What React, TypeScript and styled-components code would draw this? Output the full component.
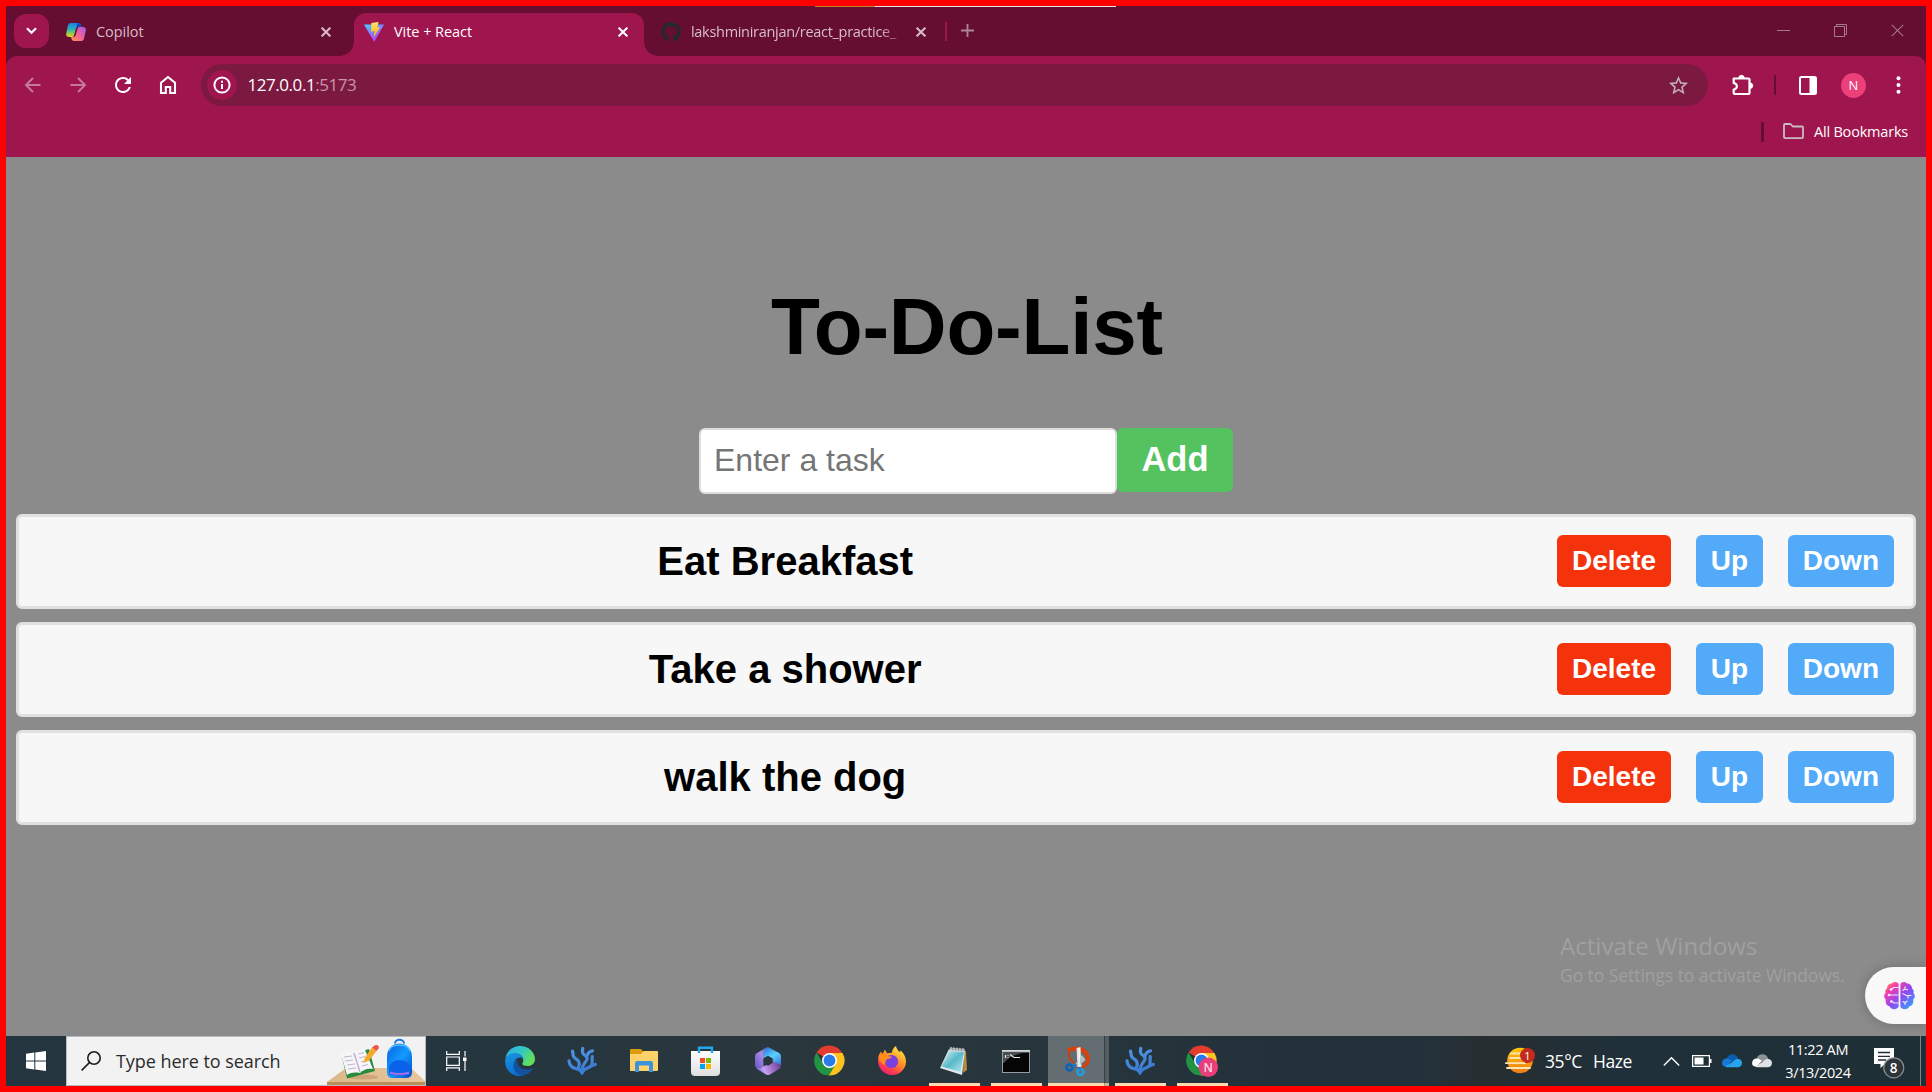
import React from "react";
import styled, { createGlobalStyle, css } from "styled-components";
import { FaGithub } from "react-icons/fa";
import { MdRefresh, MdStarBorder } from "react-icons/md";

const ui = `"Open Sans", "Noto Sans", sans-serif`;
const arial = `"Liberation Sans", Arial, sans-serif`;

const GlobalStyle = createGlobalStyle`
  *, *::before, *::after { box-sizing: border-box; }
  html, body { margin: 0; padding: 0; background: #ff0000; overflow: hidden; }
  svg { display: block; flex: none; }
`;

const Screen = styled.div`
  width: 1932px;
  height: 1092px;
  border: 6px solid #ff0000;
  display: flex;
  flex-direction: column;
  overflow: hidden;
  background: #8b8b8b;
`;

/* ---------- browser chrome ---------- */

const TabStrip = styled.header`
  position: relative;
  height: 50px;
  flex: none;
  display: flex;
  align-items: flex-start;
  background: #650e31;
`;

const EdgeSliver = styled.div`
  position: absolute;
  top: 0;
  left: 809px;
  width: 301px;
  height: 1px;
  background: linear-gradient(90deg, #c4822a 60px, #e8e4e6 60px);
`;

const TabSearch = styled.button`
  width: 35px;
  height: 34px;
  margin: 8px 0 0 8px;
  padding: 0;
  border: 0;
  border-radius: 12px;
  background: #9f154e;
  display: grid;
  place-items: center;
`;

const Tab = styled.div<{ $width: number; $active?: boolean; $left?: number; $end?: number }>`
  position: relative;
  width: ${(p) => p.$width}px;
  height: 43px;
  margin-top: 7px;
  margin-left: ${(p) => p.$left ?? 0}px;
  padding: 0 ${(p) => p.$end ?? 13}px 6px 10px;
  display: flex;
  align-items: center;
  gap: 10px;
  color: ${(p) => (p.$active ? "#ffffff" : "#d9bcc8")};
  ${(p) =>
    p.$active &&
    css`
      background: #9f154e;
      border-radius: 12px 12px 0 0;
      &::before,
      &::after {
        content: "";
        position: absolute;
        bottom: 0;
        width: 14px;
        height: 14px;
      }
      &::before {
        left: -14px;
        background: radial-gradient(circle at 0 0, transparent 13.5px, #9f154e 14px);
      }
      &::after {
        right: -14px;
        background: radial-gradient(circle at 100% 0, transparent 13.5px, #9f154e 14px);
      }
    `}
`;

const TabTitle = styled.span<{ $fade?: boolean; $spacing?: number }>`
  flex: 1;
  min-width: 0;
  overflow: hidden;
  white-space: nowrap;
  font: 400 14.5px/20px ${ui};
  letter-spacing: ${(p) => p.$spacing ?? -0.05}px;
  ${(p) => p.$fade && css`mask-image: linear-gradient(90deg, #000 88%, transparent 100%);`}
`;

const TabDivider = styled.i`
  width: 2px;
  height: 19px;
  margin: 16px 0 0 6px;
  background: #9f154e;
`;

const NewTab = styled.div`
  margin: 18px 0 0 14px;
`;

const WindowControls = styled.div`
  margin: 18px 22px 0 auto;
  display: flex;
  gap: 44px;
`;

const ToolbarBack = styled.div`
  flex: none;
  height: 101px;
  background: #650e31;
`;

const ToolbarArea = styled.div`
  height: 101px;
  border-radius: 11px 11px 0 0;
  background: #9f154e;
  display: flex;
  flex-direction: column;
`;

const Toolbar = styled.div`
  height: 58px;
  display: flex;
  align-items: center;
  padding-left: 15px;
`;

const NavButtons = styled.nav`
  width: 180px;
  display: flex;
  gap: 21px;
`;

const Omnibox = styled.div`
  width: 1507px;
  height: 42px;
  border-radius: 21px;
  background: #7c1940;
  display: flex;
  align-items: center;
  padding: 0 18px 0 6px;
`;

const SiteInfo = styled.span`
  width: 30px;
  height: 30px;
  border-radius: 50%;
  background: #9f154e;
  display: grid;
  place-items: center;
`;

const Url = styled.span`
  flex: 1;
  margin-left: 10.5px;
  font: 400 17px/24px ${ui};
  letter-spacing: -0.45px;
  color: #ffffff;
`;

const Port = styled.span`
  color: #c795aa;
`;

const VLine = styled.i<{ $w: number; $l: number; $r: number }>`
  flex: none;
  width: ${(p) => p.$w}px;
  height: 20px;
  margin-left: ${(p) => p.$l}px;
  margin-right: ${(p) => p.$r}px;
  background: #650e31;
  border-radius: 1px;
`;

const ToolbarActions = styled.div`
  display: flex;
  align-items: center;
  padding-left: 24px;
`;

const Avatar = styled.span`
  width: 25px;
  height: 25px;
  margin: 0 30px 0 24px;
  border-radius: 50%;
  background: #ec407a;
  color: #fff;
  font: 400 13px/25px ${ui};
  text-align: center;
`;

const BookmarkBar = styled.div`
  height: 34px;
  display: flex;
  align-items: center;
  justify-content: flex-end;
  padding: 0 18px 1px 0;
  margin-top: 1px;
  font: 400 14.5px/20px ${ui};
  letter-spacing: -0.2px;
  color: #ffffff;
`;

const BookmarkText = styled.span`
  width: 94px;
  margin-left: 10px;
  white-space: nowrap;
`;

/* ---------- page ---------- */

const Page = styled.main`
  position: relative;
  flex: 1;
  background: #8b8b8b;
  padding: 124px 10px 0;
  font-family: ${arial};
`;

const Heading = styled.h1`
  margin: 0 0 55px;
  padding-left: 2px;
  font: 700 80px/92px ${arial};
  letter-spacing: -0.2px;
  text-align: center;
  color: #000;
`;

const EntryRow = styled.form`
  display: flex;
  justify-content: center;
  align-items: flex-start;
  height: 66px;
  margin-bottom: 20px;
`;

const TaskInput = styled.input`
  width: 418px;
  height: 66px;
  padding: 0 12px 2px 13px;
  border: 2px solid #dddddd;
  border-radius: 6px;
  background: #fff;
  font: 400 32px/38px ${arial};
  outline: none;
  &::placeholder {
    color: #757575;
    opacity: 1;
  }
`;

const Button = styled.button<{ $color: string }>`
  height: 52px;
  padding: 0 15px 1px;
  border: 0;
  border-radius: 6px;
  background: ${(p) => p.$color};
  color: #fff;
  font: 700 28px/32px ${arial};
`;

const AddButton = styled(Button)`
  width: 116px;
  height: 64px;
  padding: 0 0 2px;
  font-size: 34.500px;
  line-height: 40px;
`;

const TaskList = styled.ol`
  list-style: none;
  margin: 0;
  padding: 0;
  display: flex;
  flex-direction: column;
  gap: 13px;
`;

const TaskItem = styled.li`
  height: 95px;
  padding: 0 19px 1px;
  border: 3px solid #e0e0e0;
  border-radius: 6px;
  background: #f7f7f7;
  display: flex;
  align-items: center;
  gap: 24.700px;
`;

const TaskText = styled.span`
  flex: 1;
  padding-bottom: 1px;
  font: 700 40px/46px ${arial};
  text-align: center;
  color: #000;
`;

const Watermark = styled.div`
  position: absolute;
  left: 1554px;
  top: 772px;
  color: #a0a0a0;
  font: 400 17.5px/24px ${ui};
  letter-spacing: -0.06px;
  white-space: nowrap;
`;

const WatermarkTitle = styled.div`
  font-size: 24px;
  line-height: 34px;
  letter-spacing: 0.03px;
`;

const BrainTab = styled.div`
  position: absolute;
  right: 0;
  top: 810px;
  width: 61px;
  height: 57px;
  padding-left: 19px;
  border-radius: 29px 0 0 29px;
  background: #f8f8f8;
  box-shadow: 0 0 12px rgba(0, 0, 0, 0.22);
  display: flex;
  align-items: center;
`;

/* ---------- taskbar ---------- */

const Taskbar = styled.footer`
  height: 50px;
  flex: none;
  display: flex;
  background: linear-gradient(90deg, #24353f 0%, #25363f 25%, #2a373d 40%, #26343c 58%, #22313a 66%, #23323a 74%, #272e31 77%, #20303a 84%, #1f2f36 100%);
  color: #fff;
`;

const StartButton = styled.div`
  width: 60px;
  display: grid;
  place-items: center;
`;

const SearchBox = styled.div`
  width: 360px;
  height: 50px;
  background: #f2f2f2;
  border: 1px solid #b9bcbe;
  display: flex;
  align-items: center;
  padding-left: 14px;
  overflow: hidden;
`;

const SearchText = styled.span`
  width: 213px;
  margin-left: 15px;
  font: 400 18px/26px ${ui};
  letter-spacing: -0.06px;
  color: #2b2b2b;
  white-space: nowrap;
`;

const AppSlot = styled.div<{ $state?: "open" | "focused" }>`
  width: 62px;
  height: 50px;
  display: grid;
  place-items: center;
  ${(p) =>
    p.$state === "open" &&
    css`background: linear-gradient(#fbdab0, #fbdab0) 6px 100% / 51px 3px no-repeat;`}
  ${(p) =>
    p.$state === "focused" &&
    css`
      background:
        linear-gradient(90deg, #fbdab0 56px, #a89a85 56px, #a89a85 57px, #d0b793 57px) 1px 100% / 61px 3px no-repeat,
        linear-gradient(90deg, transparent 1px, #646d71 1px, #646d71 57px, #363f43 57px, #363f43 58px, #545d61 58px);
    `}
`;

const TaskViewSlot = styled.div`
  width: 63px;
  padding: 15px 0 0 20px;
`;

const Tray = styled.div`
  margin-left: auto;
  width: 421px;
  display: flex;
  align-items: center;
`;

const Weather = styled.span`
  display: flex;
  gap: 11px;
  width: 122px;
  padding-left: 9px;
  font: 400 17.5px/24px ${ui};
  letter-spacing: -0.4px;
`;

const TrayIcons = styled.div`
  display: flex;
  align-items: center;
  gap: 10px;
  margin-left: 5px;
`;

const BatterySlot = styled.span`
  padding-left: 2px;
`;

const Clock = styled.div`
  width: 92px;
  font: 400 14.5px/23px ${ui};
  letter-spacing: -0.35px;
  text-align: center;
`;

const Notifications = styled.div`
  padding: 4px 0 0 10px;
`;

const ShowDesktop = styled.i`
  width: 6px;
  height: 50px;
  margin-left: auto;
  border-left: 1px solid #7b8488;
`;

/* ---------- icons ---------- */

const Cross = ({ size = 10, w = 2, color = "currentColor" }: { size?: number; w?: number; color?: string }) => (
  <svg width={size} height={size} viewBox="0 0 10 10" stroke={color} strokeWidth={w} fill="none">
    <path d="M.6.6 9.4 9.4M9.4.6.6 9.4" />
  </svg>
);

const CopilotIcon = () => (
  <svg width="20" height="20" viewBox="0 0 20 20">
    <defs>
      <linearGradient id="cpA" x1="0" y1="0" x2="0" y2="1">
        <stop offset="0" stopColor="#1f7fe8" />
        <stop offset=".45" stopColor="#27b5b8" />
        <stop offset=".75" stopColor="#8fce4b" />
        <stop offset="1" stopColor="#f3c91f" />
      </linearGradient>
      <linearGradient id="cpB" x1="1" y1="0" x2="0" y2="1">
        <stop offset="0" stopColor="#a45cf0" />
        <stop offset=".5" stopColor="#f0609a" />
        <stop offset="1" stopColor="#fb9a45" />
      </linearGradient>
    </defs>
    <path d="M5 1h7.5c1.4 0 2 .7 2.4 2l.6 2H12c-1.2 0-1.8.6-2.1 1.7L8 13.2C7.700 14.400 7 15 6 15H3c-2.400 0-3.300-1.600-2.700-4L2 3.600C2.500 1.800 3.400 1 5 1Z" fill="url(#cpA)" />
    <path d="M11.500 1h1c1.400 0 2 .7 2.400 2l.6 2H12c-1 0-1.700.5-2 1.500Z" fill="#1547c0" />
    <path d="M15 19H8c-1.400 0-2-.7-2.400-2L5 15h2.500c1.200 0 1.800-.6 2.100-1.700L11.500 6.800C11.800 5.600 12.500 5 13.500 5H17c2.400 0 3.300 1.600 2.700 4L18 16.400C17.500 18.200 16.600 19 15 19Z" fill="url(#cpB)" />
  </svg>
);

const ViteIcon = () => (
  <svg width="20" height="20" viewBox="0 0 20 20">
    <defs>
      <linearGradient id="vt" x1="0" y1="0" x2=".6" y2="1">
        <stop offset="0" stopColor="#41d1ff" />
        <stop offset="1" stopColor="#bd34fe" />
      </linearGradient>
      <linearGradient id="vb" x1="0" y1="0" x2="0" y2="1">
        <stop offset="0" stopColor="#ffea6a" />
        <stop offset="1" stopColor="#ffa800" />
      </linearGradient>
    </defs>
    <path d="M0 2.500 20 2.500 10.300 20Z" fill="url(#vt)" />
    <path d="M7.400.9 14.600 0 13.200 5.400l3-.5L9.600 15.400 10.400 9 7 9.800Z" fill="url(#vb)" />
  </svg>
);

const Arrow = ({ flip }: { flip?: boolean }) => (
  <svg width="24" height="24" viewBox="0 0 24 24" fill="none" stroke="#c8799b" strokeWidth="2" transform={flip ? "scale(-1 1)" : undefined}>
    <path d="M19.500 12H6M12 5l-7 7 7 7" />
  </svg>
);

const HomeIcon = () => (
  <svg width="24" height="24" viewBox="0 0 24 24" fill="none" stroke="#fff" strokeWidth="2.100">
    <path d="M5 9.700 12 4l7 5.700V20h-4.800v-6H9.800v6H5Z" />
  </svg>
);

const InfoIcon = () => (
  <svg width="18" height="18" viewBox="0 0 18 18" fill="none" stroke="#fff" strokeWidth="2">
    <circle cx="9" cy="9" r="7.600" />
    <path d="M9 8v5M9 4.700v2" />
  </svg>
);

const PuzzleIcon = () => (
  <svg width="22" height="22" viewBox="0 0 22 22">
    <path d="M1.700 4.500h5.500h9.300q1 0 1 1v4.500v9q0 1-1 1H2.700q-1 0-1-1v-3.500a2.900 2.900 0 0 0 0-6.300V4.500Z" fill="none" stroke="#fff" strokeWidth="2.200" strokeLinejoin="round" />
    <path d="M6.800 4a2.700 2.700 0 0 1 5.400 0ZM18 9a2.700 2.700 0 0 1 0 5.400Z" fill="#fff" stroke="#fff" strokeWidth="1" />
  </svg>
);

const PanelIcon = () => (
  <svg width="18" height="19" viewBox="0 0 18 19">
    <rect x="1" y="1" width="16" height="17" rx="1.500" fill="none" stroke="#fff" strokeWidth="2" />
    <path d="M10.500 1H17v17h-6.500Z" fill="#fff" />
  </svg>
);

const DotsIcon = () => (
  <svg width="5" height="18" viewBox="0 0 5 18" fill="#fff">
    <circle cx="2.500" cy="2.200" r="2" />
    <circle cx="2.500" cy="9" r="2" />
    <circle cx="2.500" cy="15.800" r="2" />
  </svg>
);

const FolderOutline = () => (
  <svg width="21" height="17" viewBox="0 0 21 17" fill="none" stroke="#c9bcc1" strokeWidth="1.800" strokeLinejoin="round">
    <path d="M1 2q0-1 1-1h5.500l2.300 2.500H19q1 0 1 1V14q0 1.200-1 1.200H2q-1 0-1-1.200Z" />
  </svg>
);

const BrainIcon = () => (
  <svg width="31" height="29" viewBox="0 0 31 29">
    <defs>
      <linearGradient id="br" x1="0" y1="0" x2="1" y2="1">
        <stop offset="0" stopColor="#ff9a2e" />
        <stop offset=".25" stopColor="#f53cb0" />
        <stop offset=".55" stopColor="#8b4bf0" />
        <stop offset="1" stopColor="#22b4ff" />
      </linearGradient>
    </defs>
    <path d="M14.600 3C13.500.5 9.500.2 8 2.500 4.800 2.500 3 4.500 3 7.500 1 9 1 10.500 1.600 12-.4 14-.2 17 1.800 18.500 1 22.500 3 25 5.500 25.300c1.500 3.500 7.500 4 9.100.5ZM16.400 3c1.100-2.500 5.100-2.800 6.600-.5 3.200 0 5 2 5 5 2 1.500 2 3 1.400 4.500 2 2 1.800 5-.2 6.500.8 4-1.200 6.500-3.700 6.800-1.500 3.500-7.500 4-9.100.5Z" fill="url(#br)" />
    <path d="M14.500 6.500H9.500L7.500 8.500M14.500 14H5M14.500 22H10L7.500 20M18.500 9.500l2.500-1.500 3 1M21 8V5.500M18.500 12.500l4 2h5M24 14.500v3M18.500 20.500l2.500 1 2.500-1.500M21 21.500v2.500" fill="none" stroke="#f6e8ff" strokeWidth="1.200" />
    <circle cx="7" cy="8.500" r="1.300" fill="#f8e8ff" />
    <circle cx="5" cy="14" r="1.300" fill="#f8e8ff" />
    <circle cx="7.300" cy="20.500" r="1.300" fill="#f8e8ff" />
  </svg>
);

const WindowsLogo = () => (
  <svg width="20" height="20" viewBox="0 0 20 20" fill="#fff">
    <path d="M0 2.800 8.300 1.600V9.500H0ZM9.300 1.400 20 0V9.500H9.300ZM0 10.500H8.300v8L0 17.300ZM9.300 10.500H20V20L9.300 18.600Z" />
  </svg>
);

const SearchIcon = () => (
  <svg width="20" height="20" viewBox="0 0 20 20" fill="none" stroke="#1c1c1c" strokeWidth="1.600">
    <circle cx="13" cy="7" r="6.200" />
    <path d="M8.600 11.400.6 19.400" />
  </svg>
);

const SchoolArt = () => (
  <svg width="98" height="48" viewBox="0 0 98 48">
    <defs>
      <linearGradient id="bp" x1="0" y1="0" x2="1" y2="1">
        <stop offset="0" stopColor="#0a5fe0" />
        <stop offset=".5" stopColor="#129bff" />
        <stop offset="1" stopColor="#0548c8" />
      </linearGradient>
      <linearGradient id="tb" x1="0" y1="0" x2="1" y2="0">
        <stop offset="0" stopColor="#dcb88a" />
        <stop offset="1" stopColor="#e6c79d" />
      </linearGradient>
    </defs>
    <path d="M19 31H84L98 44v1H0Z" fill="url(#tb)" />
    <path d="M0 45H98v3H0Z" fill="#b98e5b" />
    <ellipse cx="36" cy="40" rx="15" ry="2.500" fill="#b98e5b" opacity=".5" />
    <path d="M15 20 20 41.500 48 34 42 12Z" fill="#2a8a3c" />
    <path d="M14 17c4-3 9-3 13-1 2-3 6-4.500 11-3l8 19c-6-1-10 1-13 4-5-1-9-.5-13 2Z" fill="#f7f5fa" />
    <path d="M27 16l6 19" stroke="#b9b3c9" strokeWidth="1.500" />
    <path d="M17 20l8-1M18 24l8-1M20 28l8-1M21 32l8-1M31 17l6-1.500M32 21l6-1.500M34 25l6-1.500M35 29l6-1.500" stroke="#b5afc8" strokeWidth=".9" />
    <path d="M36.500 26 38 20.500 45 10.500l4.500 3.500L42 23.500Z" fill="#f7a928" />
    <path d="M45 10.500l2.500-2q4-1.500 4.500 2.500l-2.500 3Z" fill="#ef5248" />
    <path d="M68 6.500c0-5 9-5 9 0" fill="none" stroke="#1976e8" strokeWidth="2" />
    <path d="M60 20C60 2 85 2 85 20V35q0 6-6 6H66q-6 0-6-6Z" fill="url(#bp)" />
    <path d="M62 14C64 6 81 6 83 14" fill="none" stroke="#58c0ff" strokeWidth="1.500" />
    <path d="M62 32c0-12 21-12 21 0v3q0 3-3 3H65q-3 0-3-3Z" fill="#0b62ea" />
    <path d="M63 34.500q9 3 19 0v2.500q-9 2-19 0Z" fill="#a76cf5" />
  </svg>
);

const TaskViewIcon = () => (
  <svg width="21" height="20" viewBox="0 0 21 20" fill="none" stroke="#fff" strokeWidth="1.200">
    <path d="M.7 0V3.400H13.300V0M.7 6H13.300V14.300H.7ZM.7 20V16.900H13.300V20M19 0v5.500M19 10v10" />
    <path d="M17 6.500h3.500v3.500h-3.500Z" fill="#fff" stroke="none" />
  </svg>
);

const EdgeIcon = () => (
  <svg width="30" height="30" viewBox="0 0 30 30">
    <defs>
      <linearGradient id="eg1" x1="0" y1="0" x2="1" y2=".5">
        <stop offset="0" stopColor="#35a8ea" />
        <stop offset=".5" stopColor="#2fc5c9" />
        <stop offset="1" stopColor="#62e05a" />
      </linearGradient>
      <linearGradient id="eg2" x1="0" y1="0" x2=".4" y2="1">
        <stop offset="0" stopColor="#1a95e0" />
        <stop offset="1" stopColor="#0a6fd0" />
      </linearGradient>
    </defs>
    <path d="M.4 12C2 5 7.500 0 15 0c8.500 0 15 6.300 15 13 0 4.500-3.500 7-7.200 7-3.300 0-5.500-1-5.500-2.300 0-.8 1-1.400 1-3.200C18.300 11 15 8 10.500 8 5 8 2 10 .4 12Z" fill="url(#eg1)" />
    <path d="M.2 14C1 9.500 5 7 10 7c4.500 0 8 2.500 8.300 6-1-1-2-1.500-3.300-1.500-3.500 0-6 3.500-6 7.500 0 5.500 4 9.800 9 10.500-1 .4-2 .5-3 .5C6 30-.8 22.500.2 14Z" fill="url(#eg2)" />
    <path d="M12.300 13.500C9.500 15 8 18 8.500 21c.8 5.500 6 9 10 8.500 4-.7 7.500-3.500 9.300-6.500.3-.6-.2-1-.8-.6-1.500.8-3.200 1.100-5 1.100-6 0-10.500-4-9.700-10Z" fill="#12529f" />
  </svg>
);

const CoralIcon = () => (
  <svg width="30" height="30" viewBox="0 0 30 30" fill="none" strokeWidth="3.200" strokeLinecap="round" strokeLinejoin="round">
    <defs>
      <linearGradient id="coral" gradientUnits="userSpaceOnUse" x1="8" y1="2" x2="16" y2="29">
        <stop offset="0" stopColor="#5196e4" />
        <stop offset="1" stopColor="#3577d0" />
      </linearGradient>
    </defs>
    <g stroke="url(#coral)">
      <path d="M14.500 26C12.500 22 7.500 23.500 4.500 20.500 2.800 18.800 2.200 17 2 14.800" />
      <path d="M10.500 23C13 19.500 12.800 17 11 14.500 9.500 12.500 6.500 12.500 6.200 9.500 6 7.500 6 6.500 5.500 5.200" />
      <path d="M15.500 24C15 20.500 16.500 18.500 18.500 16 21 13 20.500 11 18 9.500 15.500 8 14.800 6 15.800 2.500" />
      <path d="M19.500 11C20.500 7.500 21.500 5.500 25.500 4.800" />
      <path d="M15 26.500C16.500 21.500 22 23 24.500 19.500 26 17 24.500 14.500 25.300 10.500" />
      <path d="M24.500 19.800 28.300 18.500" />
    </g>
    <path d="M11 22.500q4-1.500 8.500 0L15.500 29h-1Z" fill="#3a7dd4" />
  </svg>
);

const ExplorerIcon = () => (
  <svg width="28" height="24" viewBox="0 0 28 24">
    <path d="M0 1q0-1 1-1h10l3 3.500v4H0Z" fill="#dd9b0c" />
    <path d="M0 5h11l2.500-3H27q1 0 1 1v18q0 1-1 1H0Z" fill="#fdd26a" />
    <path d="M5 23V14q0-2 2-2H21q2 0 2 2v9h-4v-6.500h-10v6.500Z" fill="#3d92dc" />
  </svg>
);

const StoreIcon = () => (
  <svg width="30" height="30" viewBox="0 0 30 30">
    <defs>
      <linearGradient id="st" x1="0" y1="0" x2="0" y2="1">
        <stop offset="0" stopColor="#fff" />
        <stop offset="1" stopColor="#dedede" />
      </linearGradient>
    </defs>
    <path d="M0 5H29V26q0 4-4 4H4q-4 0-4-4Z" fill="url(#st)" />
    <path d="M8 7V1.700H21V7" fill="none" stroke="#20a8ef" strokeWidth="2.400" />
    <path d="M9 12h5v5H9Z" fill="#f04e23" />
    <path d="M15 12h5v5h-5Z" fill="#7eb900" />
    <path d="M9 18h5v5H9Z" fill="#00a3ee" />
    <path d="M15 18h5v5h-5Z" fill="#fdb800" />
  </svg>
);

const OfficeIcon = () => (
  <svg width="26" height="28" viewBox="0 0 26 28">
    <defs>
      <linearGradient id="of1" x1=".3" y1="0" x2=".9" y2="1">
        <stop offset="0" stopColor="#2f7fe0" />
        <stop offset=".45" stopColor="#5cd0fa" />
        <stop offset="1" stopColor="#3a6be0" />
      </linearGradient>
      <linearGradient id="of2" x1="1" y1="0" x2="0" y2="1">
        <stop offset="0" stopColor="#3f5fd8" />
        <stop offset=".4" stopColor="#a98be6" />
        <stop offset="1" stopColor="#6a56c8" />
      </linearGradient>
      <linearGradient id="of3" x1="0" y1=".6" x2="1" y2=".4">
        <stop offset="0" stopColor="#5c62d8" />
        <stop offset=".3" stopColor="#c8a0f2" />
        <stop offset="1" stopColor="#6c4096" />
      </linearGradient>
    </defs>
    <path d="M13 0 24 6q2 1 2 3v10L17.500 14.500V11.500L13 9 8 11.500 8.500 3Z" fill="url(#of1)" />
    <path d="M13 0Q8.500 3 8.500 8v12L1.500 21Q0 20 0 18V9q0-2 2-3L11 .8Q12 .2 13 0Z" fill="url(#of2)" />
    <path d="M1 20.500q4 1 7.500-1L17.500 14.500 26 18q0 3-2 4l-9 5.400q-2 1-4 0L2 22Z" fill="url(#of3)" />
    <path d="M13 9 17.500 11.500v4.500L13 18.700l-4.500-2.500V11.500Z" fill="#29363e" />
  </svg>
);

const ChromeIcon = ({ badge }: { badge?: boolean }) => (
  <svg width="32" height="32" viewBox="0 0 32 32">
    <path d="M15.500 15 2.500 7.500A15 15 0 0 1 28.500 8.500Z" fill="#e33b2e" />
    <path d="M15.500 8H28.500A15 15 0 0 1 15 30.500Z" fill="#fcc31e" />
    <path d="M2.500 7.500A15 15 0 0 0 15 30.500L21.500 19.500 9.500 19Z" fill="#229342" />
    <circle cx="15.500" cy="15.500" r="7.500" fill="#fff" />
    <circle cx="15.500" cy="15.500" r="5.900" fill="#2a7bea" />
    {badge && <circle cx="22.300" cy="22.300" r="9.700" fill="#ea3d79" />}
    {badge && (
      <text x="22.300" y="26.600" textAnchor="middle" fontFamily="Open Sans, sans-serif" fontWeight="600" fontSize="12" fill="#fbdbe6">
        N
      </text>
    )}
  </svg>
);

const FirefoxIcon = () => (
  <svg width="30" height="30" viewBox="0 0 30 30">
    <defs>
      <linearGradient id="ff" x1=".8" y1="0" x2=".2" y2="1">
        <stop offset="0" stopColor="#fff04a" />
        <stop offset=".4" stopColor="#ff9a26" />
        <stop offset=".75" stopColor="#ff3f4a" />
        <stop offset="1" stopColor="#e31587" />
      </linearGradient>
    </defs>
    <path d="M1 13C1.200 10 2.500 7 4 5.500L5.500 8 8 3.500l2 3.700 5-.5C15 4 16.500 1.500 19 0c.5 3 2 4.500 4 6.200l.5-1.700C27 7.500 29 11 29 15.500 29 23 23 29 15 29S.5 22.500 1 13Z" fill="url(#ff)" />
    <circle cx="14.500" cy="15.500" r="6.600" fill="#7a40e0" />
    <path d="M2 9c4-2 7-1 9 1l4 .8c-1 2-4 2-5.500 2.600C9 15 7.500 17 8 19 3 17 1.500 13 2 9Z" fill="#ff8a1e" />
  </svg>
);

const NotepadIcon = () => (
  <svg width="28" height="28" viewBox="0 0 28 28">
    <defs>
      <linearGradient id="np" x1="0" y1="0" x2="1" y2="1">
        <stop offset="0" stopColor="#d5f3f6" />
        <stop offset=".5" stopColor="#58b9c9" />
        <stop offset="1" stopColor="#bfe9ee" />
      </linearGradient>
    </defs>
    <path d="M24 4h2l1 19-4 3Z" fill="#b98a3a" />
    <path d="M9 2 25 3 22 28 0 21Z" fill="#dfeaec" />
    <path d="M9.500 4 24 5 20.500 25 1.500 19.500Z" fill="url(#np)" />
    <path d="M9 3 25 4.500V2L10 .5Z" fill="#8c9396" />
    <path d="M11 0v4M14 .3v4M17 .6v4M20 .9v4M23 1.200v4" stroke="#dfe5e6" strokeWidth="1" />
  </svg>
);

const TerminalIcon = () => (
  <svg width="28" height="23" viewBox="0 0 28 23">
    <path d="M0 0H28V23H0Z" fill="#9a9d9f" />
    <path d="M1 2.500H27V22H1Z" fill="#050505" />
    <path d="M1 2.500H26Q8 4 2 13H1Z" fill="#4b4e50" />
    <path d="M3.500 5v3M6 5.200v.8M6 7v.8M8 4.500l4 3H18" stroke="#e8e8e8" strokeWidth="1.200" fill="none" />
    <path d="M0 .8H28" stroke="#d8dadb" strokeWidth="1.500" />
  </svg>
);

const SnipIcon = () => (
  <svg width="27" height="31" viewBox="0 0 27 31">
    <path d="M2 3C7-.5 16-.5 21 4c6.500 6 5 16-4 18.500-2 .5-3-1-1-2 6-3 6.500-8.500 3-12.500C15 4 10 4.500 7 5.500Q2 6.500 2 3Z" fill="#d8400c" />
    <path d="M4.500 6C3 10 5 14 9 17" stroke="#cf3c0b" strokeWidth="1.800" fill="none" />
    <path d="M11.500 2 15.500 1 16.500 21h-4Z" fill="#dfe2e4" />
    <path d="M17 9l3.500 5-8 6.500-2.500-2Z" fill="#b9bec1" />
    <path d="M14 2v18" stroke="#f5f6f7" strokeWidth="1.500" />
    <circle cx="4.500" cy="21.500" r="3" fill="none" stroke="#0a62b8" strokeWidth="2.600" />
    <circle cx="15.500" cy="26" r="3" fill="none" stroke="#1f9fe6" strokeWidth="2.600" />
    <path d="m7 20.500 4.500-2M14.500 23.500v-2.500" stroke="#1577c8" strokeWidth="2.200" />
  </svg>
);

const WeatherIcon = () => (
  <svg width="31" height="28" viewBox="0 0 31 28">
    <defs>
      <linearGradient id="wx" x1="0" y1="0" x2="0" y2="1">
        <stop offset="0" stopColor="#ffc800" />
        <stop offset="1" stopColor="#f07c1c" />
      </linearGradient>
    </defs>
    <circle cx="15" cy="13.500" r="12.800" fill="url(#wx)" />
    <path d="M6 6.500H16M5 11H24M.8 16.200H20M2 21H25" stroke="#fbe3b4" strokeWidth="1.800" strokeLinecap="round" />
    <circle cx="22.500" cy="8.500" r="7.500" fill="#c42b1c" />
    <text x="22.500" y="12.500" textAnchor="middle" fontFamily="Open Sans, sans-serif" fontSize="11" fill="#fff">
      1
    </text>
  </svg>
);

const ChevronUp = () => (
  <svg width="17" height="11" viewBox="0 0 17 11" fill="none" stroke="#fff" strokeWidth="1.400">
    <path d="M.8 9.500 8.500 1.800 16.200 9.500" />
  </svg>
);

const BatteryIcon = () => (
  <svg width="20" height="12" viewBox="0 0 20 12">
    <path d="M.6.600H17.400V11.400H.6Z" fill="none" stroke="#fff" strokeWidth="1.200" />
    <path d="M2.500 2.500H11.500v7h-9ZM18 4h1.500v4H18Z" fill="#fff" />
  </svg>
);

const Cloud = ({ colors }: { colors: [string, string, string] }) => (
  <svg width="20" height="14" viewBox="0 0 20 14">
    <path d="M4.500 5C5.500 1.500 8 .2 10.500.2c3 0 5 2 5.800 4.800L10 8Z" fill={colors[0]} />
    <path d="M.1 9C.1 6.500 2 4.500 4.500 4.500c2 0 3 .6 5.500 2.500L4.500 12.500Q.1 13 .1 9Z" fill={colors[1]} />
    <path d="M3 12.600 10.500 8C13 5.500 14 5 16 5c2.500 0 4 1.800 4 4s-1.500 4.200-4 4.200H5Q4 13.200 3 12.600Z" fill={colors[2]} />
  </svg>
);

const NotificationIcon = () => (
  <svg width="31" height="31" viewBox="0 0 31 31">
    <path d="M0 0H20V16H11L6.500 20V16H0Z" fill="#fff" />
    <path d="M4 4.500H16M4 8.300H16M4 12H12" stroke="#1f2f36" strokeWidth="1.300" />
    <circle cx="19.800" cy="19.800" r="10" fill="#2b3438" stroke="#8b9194" strokeWidth="1.200" />
    <text x="19.500" y="24.700" textAnchor="middle" fontFamily="Open Sans, sans-serif" fontWeight="600" fontSize="13.500" fill="#fff">
      8
    </text>
  </svg>
);

/* ---------- application ---------- */

const tasks = ["Eat Breakfast", "Take a shower", "walk the dog"];

const apps: { icon: React.ReactNode; state?: "open" | "focused" }[] = [
  { icon: <EdgeIcon /> },
  { icon: <CoralIcon /> },
  { icon: <ExplorerIcon /> },
  { icon: <StoreIcon /> },
  { icon: <OfficeIcon /> },
  { icon: <ChromeIcon /> },
  { icon: <FirefoxIcon /> },
  { icon: <NotepadIcon />, state: "open" },
  { icon: <TerminalIcon />, state: "open" },
  { icon: <SnipIcon />, state: "focused" },
  { icon: <CoralIcon />, state: "open" },
  { icon: <ChromeIcon badge />, state: "open" },
];

export default function App() {
  return (
    <Screen>
      <GlobalStyle />
      <TabStrip>
        <EdgeSliver />
        <TabSearch aria-label="Search tabs">
          <svg width="11" height="8" viewBox="0 0 11 8" fill="none" stroke="#fff" strokeWidth="2.200">
            <path d="M1 1.300 5.500 5.800 10 1.300" />
          </svg>
        </TabSearch>
        <Tab $width={298} $left={7} $end={23}>
          <CopilotIcon />
          <TabTitle>Copilot</TabTitle>
          <Cross />
        </Tab>
        <Tab $width={290} $left={0} $end={16} $active>
          <ViteIcon />
          <TabTitle>Vite + React</TabTitle>
          <Cross />
        </Tab>
        <Tab $width={288} $left={7}>
          <FaGithub size={20} color="#24292f" />
          <TabTitle $fade $spacing={-0.3}>lakshminiranjan/react_practice_</TabTitle>
          <Cross />
        </Tab>
        <TabDivider />
        <NewTab>
          <svg width="13" height="13" viewBox="0 0 13 13" stroke="#b1839a" strokeWidth="1.800">
            <path d="M6.500 0v13M0 6.500h13" />
          </svg>
        </NewTab>
        <WindowControls>
          <svg width="13" height="13" viewBox="0 0 13 13" stroke="#a8788d" strokeWidth="1">
            <path d="M0 6.500h13" />
          </svg>
          <svg width="13" height="13" viewBox="0 0 13 13" fill="none" stroke="#a8788d" strokeWidth="1">
            <path d="M.5 2.500h10v10H.5ZM2.500 2.500v-2h10v10h-2" />
          </svg>
          <Cross size={13} w={0.8} color="#a8788d" />
        </WindowControls>
      </TabStrip>

      <ToolbarBack>
        <ToolbarArea>
          <Toolbar>
            <NavButtons>
              <Arrow />
              <Arrow flip />
              <MdRefresh size={24} color="#fff" />
              <HomeIcon />
            </NavButtons>
            <Omnibox>
              <SiteInfo>
                <InfoIcon />
              </SiteInfo>
              <Url>
                127.0.0.1<Port>:5173</Port>
              </Url>
              <MdStarBorder size={23} color="#c3b3b9" />
            </Omnibox>
            <ToolbarActions>
              <PuzzleIcon />
              <VLine $w={2} $l={20} $r={23} />
              <PanelIcon />
              <Avatar>N</Avatar>
              <DotsIcon />
            </ToolbarActions>
          </Toolbar>
          <BookmarkBar>
            <VLine $w={3} $l={0} $r={19} />
            <FolderOutline />
            <BookmarkText>All Bookmarks</BookmarkText>
          </BookmarkBar>
        </ToolbarArea>
      </ToolbarBack>

      <Page>
        <Heading>To-Do-List</Heading>
        <EntryRow>
          <TaskInput type="text" placeholder="Enter a task" />
          <AddButton type="button" $color="#54c25f">
            Add
          </AddButton>
        </EntryRow>
        <TaskList>
          {tasks.map((task) => (
            <TaskItem key={task}>
              <TaskText>{task}</TaskText>
              <Button $color="#f4330d">Delete</Button>
              <Button $color="#52aaf8">Up</Button>
              <Button $color="#52aaf8">Down</Button>
            </TaskItem>
          ))}
        </TaskList>
        <Watermark>
          <WatermarkTitle>Activate Windows</WatermarkTitle>
          Go to Settings to activate Windows.
        </Watermark>
        <BrainTab>
          <BrainIcon />
        </BrainTab>
      </Page>

      <Taskbar>
        <StartButton>
          <WindowsLogo />
        </StartButton>
        <SearchBox>
          <SearchIcon />
          <SearchText>Type here to search</SearchText>
          <SchoolArt />
        </SearchBox>
        <TaskViewSlot>
          <TaskViewIcon />
        </TaskViewSlot>
        {apps.map((app, i) => (
          <AppSlot key={i} $state={app.state}>
            {app.icon}
          </AppSlot>
        ))}
        <Tray>
          <WeatherIcon />
          <Weather>
            <span>35°C</span>
            <span>Haze</span>
          </Weather>
          <TrayIcons>
            <ChevronUp />
            <BatterySlot>
              <BatteryIcon />
            </BatterySlot>
            <Cloud colors={["#0a5cad", "#1479d6", "#28a4ec"]} />
            <Cloud colors={["#8d9295", "#ffffff", "#dfe2e4"]} />
          </TrayIcons>
          <Clock>
            11:22 AM
            <br />
            3/13/2024
          </Clock>
          <Notifications>
            <NotificationIcon />
          </Notifications>
          <ShowDesktop />
        </Tray>
      </Taskbar>
    </Screen>
  );
}
